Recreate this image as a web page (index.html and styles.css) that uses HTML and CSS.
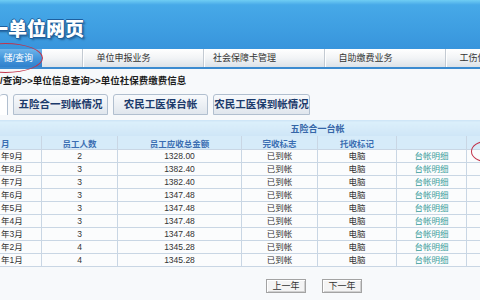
FILE: index.html
```html
<!DOCTYPE html>
<html>
<head>
    <meta charset="utf-8">
    <title>单位网页</title>
    <link rel="stylesheet" href="styles.css">
</head>
<body>
<div class="page">
    <div class="header">
        <h1 class="site-title">一单位网页</h1>
    </div>

    <div class="nav">
        <a class="nav-item active">储/查询</a>
        <span class="nav-gap"></span>
        <a class="nav-item">单位申报业务</a>
        <a class="nav-item">社会保障卡管理</a>
        <a class="nav-item">自助缴费业务</a>
        <a class="nav-item">工伤保险业务</a>
    </div>

    <div class="crumb">/查询&gt;&gt;单位信息查询&gt;&gt;单位社保费缴费信息</div>

    <div class="tabs">
        <span class="tab current"></span>
        <span class="tab">五险合一到帐情况</span>
        <span class="tab">农民工医保台帐</span>
        <span class="tab wide">农民工医保到帐情况</span>
    </div>

    <div class="panel">
        <table class="ledger">
            <colgroup>
                <col style="width: 42px">
                <col style="width: 76px">
                <col style="width: 124px">
                <col style="width: 76px">
                <col style="width: 79px">
                <col style="width: 70px">
                <col style="width: 33px">
            </colgroup>
            <tr class="caption-row">
                <th colspan="7">五险合一台帐</th>
            </tr>
            <tr class="head-row">
                <th class="month">月</th>
                <th>员工人数</th>
                <th>员工应收总金额</th>
                <th>完收标志</th>
                <th>托收标记</th>
                <th></th>
                <th></th>
            </tr>
            <tr><td class="month">年9月</td><td>2</td><td>1328.00</td><td>已到帐</td><td>电脑</td><td><a class="link">台帐明细</a></td><td></td></tr>
            <tr><td class="month">年8月</td><td>3</td><td>1382.40</td><td>已到帐</td><td>电脑</td><td><a class="link">台帐明细</a></td><td></td></tr>
            <tr><td class="month">年7月</td><td>3</td><td>1382.40</td><td>已到帐</td><td>电脑</td><td><a class="link">台帐明细</a></td><td></td></tr>
            <tr><td class="month">年6月</td><td>3</td><td>1347.48</td><td>已到帐</td><td>电脑</td><td><a class="link">台帐明细</a></td><td></td></tr>
            <tr><td class="month">年5月</td><td>3</td><td>1347.48</td><td>已到帐</td><td>电脑</td><td><a class="link">台帐明细</a></td><td></td></tr>
            <tr><td class="month">年4月</td><td>3</td><td>1347.48</td><td>已到帐</td><td>电脑</td><td><a class="link">台帐明细</a></td><td></td></tr>
            <tr><td class="month">年3月</td><td>3</td><td>1347.48</td><td>已到帐</td><td>电脑</td><td><a class="link">台帐明细</a></td><td></td></tr>
            <tr><td class="month">年2月</td><td>4</td><td>1345.28</td><td>已到帐</td><td>电脑</td><td><a class="link">台帐明细</a></td><td></td></tr>
            <tr><td class="month">年1月</td><td>4</td><td>1345.28</td><td>已到帐</td><td>电脑</td><td><a class="link">台帐明细</a></td><td></td></tr>
        </table>
    </div>

    <div class="pager">
        <button type="button">上一年</button>
        <button type="button">下一年</button>
    </div>

    <!-- hand-drawn red circles from the screenshot -->
    <span class="mark mark-nav"></span>
    <span class="mark mark-row"></span>
</div>
</body>
</html>
```

FILE: styles.css
```css
* {
    margin: 0;
    padding: 0;
    box-sizing: border-box;
}
body {
    font-family: "Liberation Sans", "Noto Sans CJK SC", sans-serif;
    font-size: 9px;
    color: #333;
    background: #f7f9fb;
}
.page {
    width: 480px;
    height: 300px;
    overflow: hidden;
    position: relative;
}

/* banner */
.header {
    height: 49px;
    padding-top: 15px;
    background: linear-gradient(180deg, #6fcdf4 0, #46a9e8 10%, #3f9fe2 55%, #3894dc 100%);
}
.site-title {
    margin-left: -11px;
    font-family: "Noto Sans CJK SC", sans-serif;
    font-size: 19px;
    font-weight: 900;
    line-height: 26px;
    color: #fff;
    white-space: nowrap;
    text-shadow: 1px 0 0 #1e5f9e, -1px 0 0 #1e5f9e, 0 1px 0 #1e5f9e, 0 -1px 0 #1e5f9e, 2px 2px 2px rgba(10, 40, 80, 0.5);
}

/* main menu */
.nav {
    display: flex;
    height: 20px;
    background: linear-gradient(180deg, #ffffff 0, #f2f4f6 50%, #dce2e8 100%);
    border-bottom: 2px solid #3b8bd0;
}
.nav-item {
    flex: none;
    width: 121px;
    padding-right: 39px;
    line-height: 18px;
    text-align: center;
    color: #333;
    white-space: nowrap;
    border-left: 1px solid #c3cad2;
    box-shadow: inset 1px 0 0 #fff;
}
.nav-item.active {
    width: 42px;
    padding-right: 9px;
    text-align: right;
    color: #fff;
    border-left: 0;
    box-shadow: none;
    background: linear-gradient(180deg, #6db4ea 0, #4597dc 50%, #2f80cc 100%);
}
.nav-gap {
    flex: none;
    width: 40px;
}

/* breadcrumb */
.crumb {
    line-height: 24px;
    font-size: 9.5px;
    font-weight: bold;
    color: #1c1c1c;
    white-space: nowrap;
}

/* tabs */
.tabs {
    display: flex;
    gap: 5px;
    margin-top: 1px;
    height: 21px;
}
.tab {
    flex: none;
    width: 95px;
    line-height: 19px;
    text-align: center;
    font-size: 10.5px;
    font-weight: bold;
    color: #1b3a6b;
    white-space: nowrap;
    background: linear-gradient(180deg, #f8fafc 0, #e0e6ed 100%);
    border: 1px solid #b1bfcf;
    border-radius: 3px 3px 0 0;
}
.tab.current {
    width: 8px;
    background: #fff;
    border-left: 0;
    border-bottom: 0;
}
.tab.wide {
    width: 97px;
}

/* ledger table */
.panel {
    padding-top: 5px;
}
.ledger {
    width: 500px;
    margin-left: -1px;
    border-collapse: collapse;
    table-layout: fixed;
}
.ledger th,
.ledger td {
    border: 1px solid #c9d6e4;
    text-align: center;
    font-size: 8.5px;
    white-space: nowrap;
    overflow: hidden;
}
.ledger td {
    height: 13px;
    line-height: 11px;
    color: #333;
    background: #fbfcfd;
}
.caption-row th {
    height: 15px;
    padding-left: 136px;
    font-size: 9px;
    font-weight: bold;
    color: #3566a8;
    background: linear-gradient(180deg, #dcf0fb 0, #cfe6f7 100%);
    border-color: #cfe6f7 #c9d6e4;
}
.head-row th {
    height: 14px;
    font-weight: bold;
    color: #3b6eb2;
    background: #d6ebf9;
}
.ledger .month {
    text-align: left;
    padding-left: 1px;
}
.link {
    color: #3a9c9c;
}

/* year switch */
.pager {
    display: flex;
    gap: 16px;
    margin-top: 12px;
    padding-left: 266px;
}
.pager button {
    width: 40px;
    height: 14px;
    font-family: "Noto Sans CJK SC", sans-serif;
    font-size: 9px;
    line-height: 12px;
    color: #333;
    background: #f4f4f4;
    border: 1px solid #a3a3a3;
    box-shadow: inset 1px 1px 0 #fff, inset -1px -1px 0 #d0d0d0;
}

/* red annotation rings */
.mark {
    position: absolute;
    border: 1px solid #c2334a;
    border-radius: 50%;
}
.mark-nav {
    left: -32px;
    top: 43px;
    width: 75px;
    height: 30px;
}
.mark-row {
    left: 471px;
    top: 141px;
    width: 30px;
    height: 21px;
}
```
